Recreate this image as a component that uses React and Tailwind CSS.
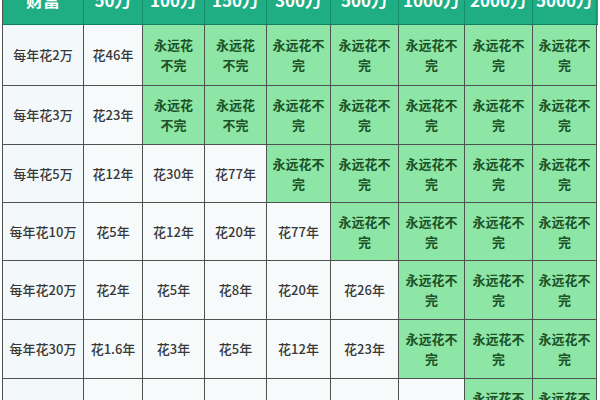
import React from "react";

const cols = ["财富", "50万", "100万", "150万", "300万", "500万", "1000万", "2000万", "5000万"];

// null means the money never runs out (green cell)
const rows = [
  { label: "每年花2万", h: "h-[61px]", values: ["花46年", null, null, null, null, null, null, null] },
  { label: "每年花3万", h: "h-[59px]", values: ["花23年", null, null, null, null, null, null, null] },
  { label: "每年花5万", h: "h-[58px]", values: ["花12年", "花30年", "花77年", null, null, null, null, null] },
  { label: "每年花10万", h: "h-[58px]", values: ["花5年", "花12年", "花20年", "花77年", null, null, null, null] },
  { label: "每年花20万", h: "h-[59px]", values: ["花2年", "花5年", "花8年", "花20年", "花26年", null, null, null] },
  { label: "每年花30万", h: "h-[59px]", values: ["花1.6年", "花3年", "花5年", "花12年", "花23年", null, null, null] },
  { label: "每年花50万", h: "h-[59px]", values: ["花1年", "花2年", "花3年", "花6年", "花10年", "花20年", null, null] },
];

const grid = "grid grid-cols-[81px_59px_62px_62px_64px_68px_66px_68px_64px]";

function GreenCell({ narrow }) {
  const lines = narrow ? ["永远花", "不完"] : ["永远花不", "完"];
  return (
    <div className="flex flex-col items-center justify-center border-r border-b border-[#4f524f] bg-[#8de6a6] text-[13px] leading-[20px] font-semibold text-[#1c5226]">
      {lines.map((l) => (
        <span key={l}>{l}</span>
      ))}
    </div>
  );
}

export default function App() {
  return (
    <div className="h-[400px] w-[600px] overflow-hidden bg-white font-['Noto_Sans_CJK_SC',sans-serif]">
      <div className="-mt-[24px] ml-[2px] w-[596px] border-l border-[#4f524f]">
        <div className={`${grid} h-[49px] bg-[#1fae84] border-b border-[#12805e]`}>
          {cols.map((c) => (
            <div
              key={c}
              className="flex items-center justify-center border-r border-[#16906b] text-[17px] font-bold text-white"
            >
              {c}
            </div>
          ))}
        </div>
        {rows.map((r) => (
          <div key={r.label} className={`${grid} ${r.h}`}>
            <div className="flex items-center justify-center border-r border-b border-[#4f524f] bg-[#f3f8fa] text-[13px] font-medium text-[#383838]">
              {r.label}
            </div>
            {r.values.map((v, i) =>
              v ? (
                <div
                  key={i}
                  className="flex items-center justify-center border-r border-b border-[#4f524f] bg-[#f7fafb] text-[13px] font-medium text-[#383838]"
                >
                  {v}
                </div>
              ) : (
                <GreenCell key={i} narrow={i === 1 || i === 2} />
              )
            )}
          </div>
        ))}
      </div>
    </div>
  );
}
